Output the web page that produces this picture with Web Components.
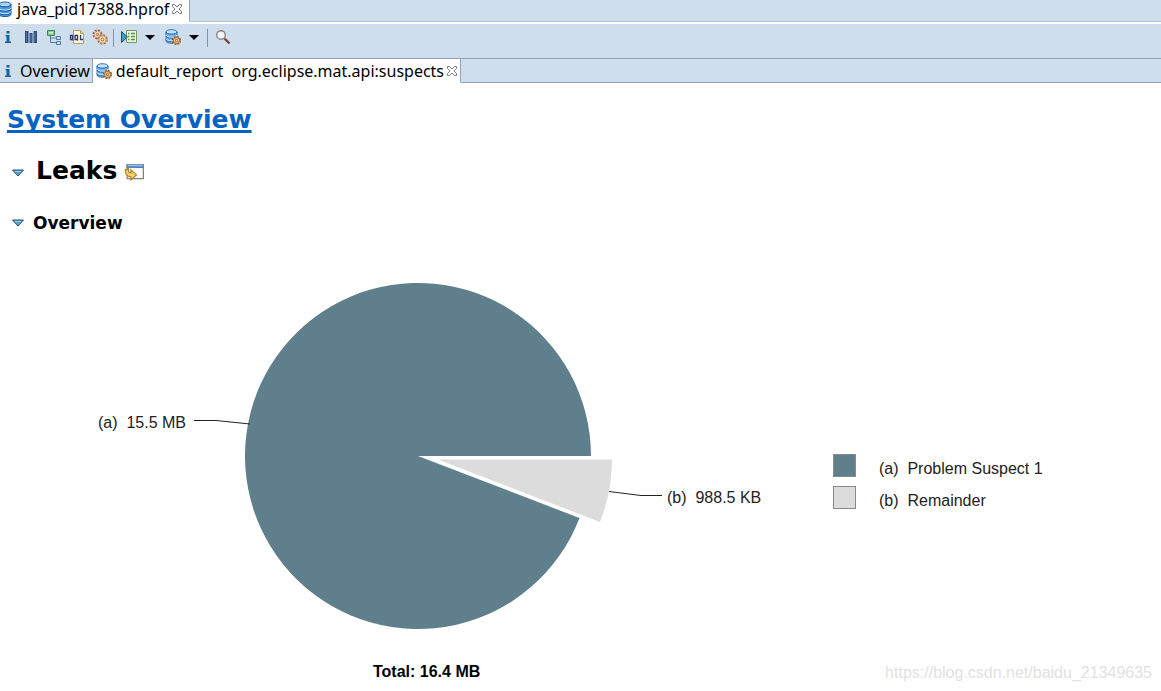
<!DOCTYPE html>
<html lang="en">
<head>
<meta charset="utf-8">
<title>Memory Analyzer - java_pid17388.hprof</title>
<style>
html, body { margin: 0; height: 100%; background: #fff; }
body { font-family: "Noto Sans", "Open Sans", sans-serif; color: #000; }
</style>
</head>
<body>
<mat-app></mat-app>
<script>
const ICONS = {
  db: `<ellipse cx="8" cy="3.5" rx="6" ry="2.5" fill="#a9d3f8" stroke="#1c5fa8"/><path d="M2 3.5v9.5c0 3.500 12 3.500 12 0V3.500c0 3.300-12 3.300-12 0z" fill="#4d9be6" stroke="#1c5fa8"/><path d="M2 7c0 3 12 3 12 0M2 10.500c0 3 12 3 12 0" fill="none" stroke="#dceeff"/><path d="M2 8c0 3 12 3 12 0M2 11.500c0 3 12 3 12 0" fill="none" stroke="#1c5fa8"/>`,
  info: `<path d="M6.500 2h3v2.500h-3zM5.500 6h4v6.500H11V14H5v-1.500h1.500v-5h-1z" fill="#14619f"/>`,
  bars: `<path d="M2 2h3.500v12H2zM6.500 4h3v10h-3zM10.500 2H14v12h-3.500z" fill="#2d4b83"/><path d="M3.500 3v10M8 5v8M12 3v10" stroke="#55739f"/>`,
  tree: `<path d="M4.500 7v6.500H10M4.500 9H10" fill="none" stroke="#557fa5"/><path d="M1.500 1.500h7v5h-7z" fill="#8acb91" stroke="#3a8555"/><path d="M3 3h4v1.500H3z" fill="#d5f0c9"/><path d="M10.500 7.500h4v3h-4zM10.500 12.500h4v3h-4z" fill="#c6dff5" stroke="#4c7da9"/>`,
  oql: `<path d="M4.500 1.500h7l3 3v10h-10z" fill="#fff7dc" stroke="#b39b62"/><path d="M11.500 1.500v3h3" fill="#e6cf8b" stroke="#b39b62"/><path d="M1.500 6.500h2v4h-2zM6 6.500h2.500v4H6zM7.500 9.500l1.500 2M11.500 6v4.500H14M3 10l1 1.500" fill="none" stroke="#34366f" stroke-width="1.300"/>`,
  gears: `<circle cx="5.500" cy="5.500" r="4.300" fill="none" stroke="#a3623c" stroke-width="1.500" stroke-dasharray="2.100 1.280"/><circle cx="5.500" cy="5.500" r="3.300" fill="#f9e6c4" stroke="#c39572"/><circle cx="5.500" cy="5.500" r="1.200" fill="#fff" stroke="#a3623c"/><circle cx="10.500" cy="10.500" r="4.600" fill="#f8d898" stroke="#a86a40" stroke-width="1.400" stroke-dasharray="2.200 1.400"/><circle cx="10.500" cy="10.500" r="3.600" fill="#f9e6c4" stroke="#c39572"/><circle cx="10.500" cy="10.500" r="1.400" fill="#fff" stroke="#a05a2c"/>`,
  run: `<path d="M5.500 1.500h10v12h-10z" fill="#eef7dc" stroke="#7e9560"/><path d="M7 4.500h1.500M7 7.500h1.500M7 10.500h1.500M10 4.500h4M10 7.500h4M10 10.500h4" stroke="#4f9450" stroke-width="1.300"/><path d="M.5 2.500v11l6-5.500z" fill="#4a98b8" stroke="#174f83"/>`,
  dbgear: `<ellipse cx="6.500" cy="3" rx="5.500" ry="2.300" fill="#c6e2fa" stroke="#2e70b4"/><path d="M1 3v9c0 3 11 3 11 0V3c0 3-11 3-11 0z" fill="#75b5ed" stroke="#2e70b4"/><path d="M1 6c0 3 11 3 11 0M1 9.500c0 3 11 3 11 0" fill="none" stroke="#e1f1ff"/><path d="M1 7c0 3 11 3 11 0M1 10.500c0 3 11 3 11 0" fill="none" stroke="#2e70b4"/><circle cx="11.500" cy="11.500" r="3.900" fill="#f5d59a" stroke="#90582c" stroke-width="1.500" stroke-dasharray="1.900 1.160"/><circle cx="11.500" cy="11.500" r="3" fill="#f8d898" stroke="#9c602d"/><circle cx="11.500" cy="11.500" r="1.200" fill="#fff" stroke="#90582c"/>`,
  search: `<path d="M9.500 9.500l5 5" stroke="#744b3b" stroke-width="2.400"/><circle cx="6" cy="6" r="4.300" fill="#f1f6f8" stroke="#8a857e" stroke-width="1.400"/><path d="M3.800 5.500c.3-1 1-1.600 2-1.700" fill="none" stroke="#fff"/>`,
  close: `<path d="M3.500 3.500h2L8 6l2.500-2.500h2v2L10 8l2.500 2.500v2h-2L8 10l-2.500 2.500h-2v-2L6 8 3.500 5.500z" fill="#fff" stroke="#7b7b7b"/>`,
  drop: `<path d="M3 6h10l-5 5z" fill="#000"/>`,
  twist: `<path d="M2.500 5h11L8 11z" fill="#5fa3bd" stroke="#294f96" stroke-linejoin="round"/><path d="M5 6.500h6" stroke="#9ccbd8"/>`,
  open: `<path d="M2.500 1.500h13v11h-13z" fill="#fff" stroke="#8a7f74"/><path d="M2 1h14v3H2z" fill="#5687bd"/><path d="M3 2h12" stroke="#9fc2e6"/><path d="M1 5.500l2.500-1v2.500l2 1V5.500l4.500 4-4.500 4v-2.500C2.500 11 1 9 1 5.500z" fill="#f8d469" stroke="#b27d28" stroke-width=".9"/>`
};

function define(name, css, html) {
  const template = document.createElement('template');
  template.innerHTML = `<style>${css}</style>${html}`;
  customElements.define(name, class extends HTMLElement {
    constructor() {
      super();
      this.attachShadow({ mode: 'open' }).append(template.content.cloneNode(true));
    }
  });
}

customElements.define('mat-icon', class extends HTMLElement {
  connectedCallback() {
    const root = this.shadowRoot || this.attachShadow({ mode: 'open' });
    root.innerHTML = `<style>:host{display:block;flex:none;width:16px;height:16px;white-space:normal}svg{display:block;width:100%;height:100%}</style>
      <svg viewBox="0 0 16 16" aria-hidden="true">${ICONS[this.getAttribute('name')]}</svg>`;
  }
});

define('mat-tab', `
  :host { display: flex; align-items: center; box-sizing: border-box; padding: 0 2px 0 0; font-size: 16px; line-height: 18px; border-right: 1px solid #94a4b8; border-bottom: 1px solid #94a4b8; }
  :host([selected]) { background: #fff; border-bottom-color: #fff; }
  :host([closable]) { padding: 0 0 0 3px; }
  button { font: inherit; color: inherit; background: none; border: 0; padding: 0; display: flex; align-items: center; gap: 4px; white-space: pre; }
  .close { display: none; }
  :host([closable]) .close { display: block; }
`, `<button type="button" role="tab"><slot name="icon"></slot><span><slot></slot></span></button><button type="button" class="close" aria-label="Close"><mat-icon name="close"></mat-icon></button>`);

define('mat-tool', `
  :host { display: block; }
  button { display: block; border: 0; padding: 0; background: none; }
`, `<button type="button"><slot></slot></button>`);

define('mat-toolbar', `
  :host { display: flex; align-items: flex-start; gap: 7px; box-sizing: border-box; height: 34px; padding: 5px 0 0; background: #cfdeec; }
  .sep { width: 1px; height: 18px; margin: 0 0 0 -2px; background: #8494a4; }
  .pair { display: flex; gap: 5px; }
`, `
  <mat-tool><mat-icon name="info"></mat-icon></mat-tool>
  <mat-tool><mat-icon name="bars"></mat-icon></mat-tool>
  <mat-tool><mat-icon name="tree"></mat-icon></mat-tool>
  <mat-tool><mat-icon name="oql"></mat-icon></mat-tool>
  <mat-tool><mat-icon name="gears"></mat-icon></mat-tool>
  <span class="sep"></span>
  <span class="pair"><mat-tool><mat-icon name="run"></mat-icon></mat-tool><mat-tool><mat-icon name="drop"></mat-icon></mat-tool></span>
  <span class="pair"><mat-tool><mat-icon name="dbgear"></mat-icon></mat-tool><mat-tool><mat-icon name="drop"></mat-icon></mat-tool></span>
  <span class="sep"></span>
  <mat-tool><mat-icon name="search"></mat-icon></mat-tool>
`);

define('mat-pie', `
  :host { display: block; }
  svg { display: block; width: 100%; }
  text { font-family: "Liberation Sans", Arial, sans-serif; font-size: 16px; fill: #222; white-space: pre; }
  .total { font-weight: bold; fill: #000; }
`, `
  <svg viewBox="0 0 800 441" role="img" aria-label="Leak suspects by size">
    <path d="M418 206H591A173 173 0 1 0 579.500 268z" fill="#5f7f8d"/>
    <path d="M438 209.500H612A174 174 0 0 1 600 272z" fill="#dcdcdc"/>
    <path d="M194 170.500H216L250 174M609 241.500L641 245.500H662" fill="none" stroke="#222"/>
    <text x="98" y="178">(a)  15.5 MB</text>
    <text x="667" y="253">(b)  988.5 KB</text>
    <text class="total" x="373" y="427">Total: 16.4 MB</text>
  </svg>
`);

define('mat-legend', `
  ul { list-style: none; margin: 0; padding: 0; display: grid; gap: 6px; font: 16px/22px "Liberation Sans", Arial, sans-serif; color: #222; white-space: pre; }
  li { display: flex; gap: 23px; }
  i { box-sizing: border-box; width: 23px; height: 23px; border: 1px solid #888; background: #5f7f8d; }
  .rest { background: #dcdcdc; }
  span { padding-top: 4px; }
`, `<ul><li><i></i><span>(a)  Problem Suspect 1</span></li><li><i class="rest"></i><span>(b)  Remainder</span></li></ul>`);

define('mat-report', `
  :host { display: flex; flex-direction: column; font-family: "DejaVu Sans", Verdana, sans-serif; }
  h1, h2, h3 { margin: 0; display: flex; align-items: center; font-weight: bold; }
  h1, h2 { font-size: 25px; line-height: 32px; }
  h1 { padding: 21px 7px 0; }
  h2 { padding: 19px 10px 0; gap: 10px; }
  h3 { padding: 26px 10px 0; gap: 7px; font-size: 17px; line-height: 20px; }
  h2 mat-icon { margin-top: 4px; }
  a { color: #0563c1; text-decoration-thickness: 3px; text-underline-offset: 2px; text-decoration-skip-ink: none; }
  .open { width: 20px; height: 20px; margin-left: -3px; }
  .chart { display: flex; align-items: flex-start; padding-top: 17px; }
  mat-pie { flex: 0 1 800px; }
  mat-legend { flex: none; padding: 204px 0 0 33px; }
`, `
  <h1><a href="#overview">System Overview</a></h1>
  <h2><mat-icon name="twist"></mat-icon>Leaks<mat-icon class="open" name="open"></mat-icon></h2>
  <h3><mat-icon name="twist"></mat-icon>Overview</h3>
  <div class="chart"><mat-pie></mat-pie><mat-legend></mat-legend></div>
`);

define('mat-app', `
  :host { display: block; position: relative; height: 100%; overflow: hidden; }
  nav { display: flex; box-sizing: border-box; background: #cfdeec; }
  .files { height: 22px; border-bottom: 1px solid #b4c3d3; }
  .files mat-tab { height: 22px; margin-left: -6px; padding-bottom: 3px; padding-right: 4px; }
  mat-toolbar { margin-top: 2px; }
  .pages { height: 25px; border-top: 1px solid #94a4b8; border-bottom: 1px solid #94a4b8; }
  .pages mat-tab { height: 24px; }
  small { position: absolute; right: 9px; bottom: 8px; font: 16px/20px "Liberation Sans", Arial, sans-serif; color: #e2e2e2; }
`, `
  <nav class="files" role="tablist"><mat-tab selected closable><mat-icon slot="icon" name="db"></mat-icon>java_pid17388.hprof</mat-tab></nav>
  <mat-toolbar></mat-toolbar>
  <nav class="pages" role="tablist"><mat-tab><mat-icon slot="icon" name="info"></mat-icon>Overview</mat-tab><mat-tab selected closable><mat-icon slot="icon" name="dbgear"></mat-icon>default_report  org.eclipse.mat.api:suspects</mat-tab></nav>
  <mat-report></mat-report>
  <small>https://blog.csdn.net/baidu_21349635</small>
`);
</script>
</body>
</html>
